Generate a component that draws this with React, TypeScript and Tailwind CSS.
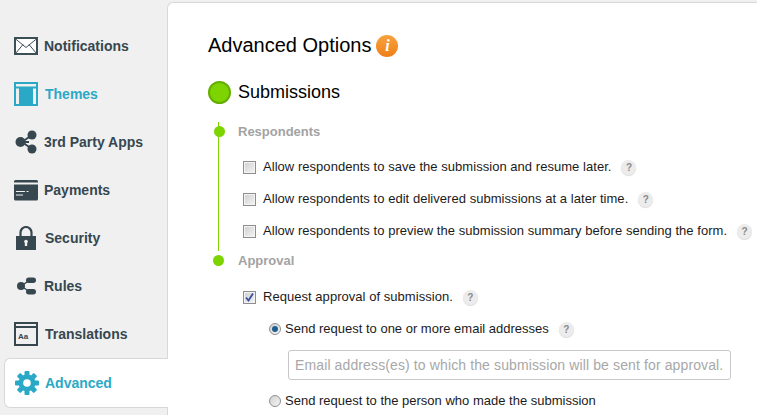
import React from 'react';

const navText = 'text-[14px] font-bold text-[#36474f]';
const activeText = 'text-[14px] font-bold text-[#2aa9c7]';

const MailIcon = () => (
  <svg width="24" height="18" viewBox="0 0 24 18">
    <rect x="1" y="1" width="22" height="16" fill="#fff" stroke="#3c4f57" strokeWidth="2" />
    <path d="M1 1.500 12 10.500 23 1.500M1.500 16.500 9 7.500M22.500 16.500 15 7.500" fill="none" stroke="#3c4f57" strokeWidth="1" />
  </svg>
);

const ThemeIcon = () => (
  <svg width="24" height="24" viewBox="0 0 24 24">
    <path d="M0 0h24v24H0z" fill="#2aa9c7" />
    <path d="M2 2h20v2.500H2zM2 6.500h3v15.500H2zM19 6.500h3v15.500h-3z" fill="#f0f0f0" />
  </svg>
);

const AppsIcon = () => (
  <svg width="24" height="24" viewBox="0 0 24 24">
    <path d="M8 12 18 5M8 12h7M8 12l10 7" stroke="#36474f" strokeWidth="2" fill="none" />
    <circle cx="6.500" cy="12" r="5" fill="#36474f" />
    <circle cx="18" cy="5" r="4.500" fill="#36474f" />
    <circle cx="18" cy="19" r="4.500" fill="#36474f" />
  </svg>
);

const CardIcon = () => (
  <svg width="24" height="21" viewBox="0 0 24 21">
    <path d="M1.500 0h21A1.500 1.500 0 0 1 24 1.500V2.500H0V1.500A1.500 1.500 0 0 1 1.500 0z" fill="#36474f" />
    <path d="M0 4.500h24V19a1.500 1.500 0 0 1-1.500 1.500h-21A1.500 1.500 0 0 1 0 19z" fill="#36474f" />
    <path d="M2 11h9v1H2zM2 14.500h7v1H2zM12.500 11h2v1h-2z" fill="#f0f0f0" />
  </svg>
);

const LockIcon = () => (
  <svg width="20" height="24" viewBox="0 0 20 24">
    <path d="M4.500 11V6.500a5.500 5.500 0 0 1 11 0V11" fill="none" stroke="#36474f" strokeWidth="2.200" />
    <path d="M0 10h20v14H0z" fill="#36474f" />
    <path d="M8.800 15h2.400v5H8.800z" fill="#f0f0f0" />
    <circle cx="10" cy="15.500" r="1.800" fill="#f0f0f0" />
  </svg>
);

const RulesIcon = () => (
  <svg width="20" height="18" viewBox="0 0 20 18">
    <path d="M5 9 14 3M5 9l9 6" stroke="#36474f" strokeWidth="1.500" fill="none" />
    <circle cx="5" cy="9" r="4" fill="#36474f" />
    <rect x="10" y="0.500" width="10" height="5.500" rx="2.750" fill="#36474f" />
    <rect x="10" y="12" width="10" height="5.500" rx="2.750" fill="#36474f" />
  </svg>
);

const TranslationIcon = () => (
  <div className="flex h-6 w-6 flex-col border-2 border-[#36474f]">
    <div className="mt-[2px] h-[2px] bg-[#36474f]" />
    <span className="mt-[4px] pl-[2px] text-[8px] leading-[10px] font-bold text-[#36474f]">Aa</span>
  </div>
);

const GearIcon = () => (
  <svg width="24" height="24" viewBox="0 0 24 24">
    <g fill="#2aa9c7">
      <rect x="9.500" y="0" width="5" height="24" rx="1" />
      <rect x="9.500" y="0" width="5" height="24" rx="1" transform="rotate(45 12 12)" />
      <rect x="9.500" y="0" width="5" height="24" rx="1" transform="rotate(90 12 12)" />
      <rect x="9.500" y="0" width="5" height="24" rx="1" transform="rotate(135 12 12)" />
      <circle cx="12" cy="12" r="8.500" />
    </g>
    <circle cx="12" cy="12" r="3.800" fill="#fff" />
  </svg>
);

const navItems = [
  { label: 'Notifications', icon: <MailIcon />, gap: 'gap-[6px]', active: false },
  { label: 'Themes', icon: <ThemeIcon />, gap: 'gap-[7px]', active: true },
  { label: '3rd Party Apps', icon: <AppsIcon />, gap: 'gap-[6px]', active: false },
  { label: 'Payments', icon: <CardIcon />, gap: 'gap-[6px]', active: false },
  { label: 'Security', icon: <LockIcon />, gap: 'gap-[7px]', active: false },
  { label: 'Rules', icon: <RulesIcon />, gap: 'gap-[6px]', active: false },
  { label: 'Translations', icon: <TranslationIcon />, gap: 'gap-[7px]', active: false },
];

const HelpBadge = () => (
  <span className="ml-[10px] flex h-[15px] w-[15px] flex-none items-center justify-center rounded-full bg-[#ececec] text-[10px] font-bold text-[#8a8a8a] shadow-[0_1px_1px_rgba(0,0,0,0.15)]">
    ?
  </span>
);

const CheckRow = ({ label, checked }: { label: string; checked?: boolean }) => (
  <div className="flex h-[20px] items-center">
    <span className="mr-[7px] flex h-[13px] w-[13px] flex-none items-center justify-center border border-[#8e8e8e] bg-gradient-to-br from-[#cfcfcf] to-[#f4f4f4] shadow-[inset_0_0_0_1px_#f4f4f4]">
      {checked && (
        <svg width="9" height="9" viewBox="0 0 9 9">
          <path d="M1 4.500 3.500 7.500 8 0.500" fill="none" stroke="#3d4f9e" strokeWidth="1.800" />
        </svg>
      )}
    </span>
    <span className="text-[13px] tracking-[0.04px] text-[#1b1b1b]">{label}</span>
    <HelpBadge />
  </div>
);

const Radio = ({ checked }: { checked?: boolean }) => (
  <span className="mr-[4px] flex h-[12px] w-[12px] flex-none items-center justify-center rounded-full border border-[#8f8f8f] bg-gradient-to-br from-[#d0d0d0] to-[#f6f6f6]">
    {checked && <span className="h-[6px] w-[6px] rounded-full bg-[#1f5f8f]" />}
  </span>
);

// green dot on the timeline, centred on the line
const SubNode = () => (
  <span className="absolute top-[4px] left-[-5px] h-[11px] w-[11px] rounded-full bg-[#7ed400]" />
);

export default function App() {
  return (
    <div className="flex h-[415px] w-[757px] overflow-hidden bg-[#f0f0f0] font-['Liberation_Sans',Arial,sans-serif]">
      {/* Sidebar */}
      <aside className="flex w-[167px] flex-none flex-col pt-[22px]">
        {navItems.map((item) => (
          <div key={item.label} className={`flex h-[48px] items-center pl-[14px] ${item.gap}`}>
            <span className="flex w-[24px] flex-none items-center justify-center">{item.icon}</span>
            <span className={item.active ? activeText : navText}>{item.label}</span>
          </div>
        ))}
        <div className="relative z-10 ml-[4px] mr-[-1px] flex h-[50px] items-center gap-[6px] rounded-l-[6px] border border-r-0 border-[#d8d8d8] bg-white pl-[10px]">
          <GearIcon />
          <span className={activeText}>Advanced</span>
        </div>
      </aside>

      {/* Main panel */}
      <main className="mt-[2px] flex-1 rounded-tl-[6px] border-t border-l border-[#d8d8d8] bg-white pl-[40px]">
        <div className="mt-[28px] flex h-[28px] items-center gap-[5px]">
          <h1 className="text-[20px] font-normal text-black">Advanced Options</h1>
          <span className="mt-[2px] flex h-[22px] w-[22px] items-center justify-center rounded-full bg-gradient-to-b from-[#f9a23c] to-[#ee7f16] font-['Liberation_Serif',serif] text-[16px] font-bold text-white italic">
            i
          </span>
        </div>

        <div className="mt-[21px] flex h-[24px] items-center gap-[7px]">
          <span className="h-[23px] w-[23px] rounded-full border-2 border-[#64ae00] bg-[#7ed400]" />
          <h2 className="text-[18px] font-normal text-black">Submissions</h2>
        </div>

        <div className="ml-[10px] border-l border-[#7ed400] pl-[19px]">
          <div className="relative -ml-[19px] mt-[18px] flex h-[20px] items-center pl-[19px]">
            <SubNode />
            <h3 className="text-[13px] font-bold text-[#a3a3a3]">Respondents</h3>
          </div>
          <div className="mt-[15px] ml-[5px] flex flex-col gap-[12px]">
            <CheckRow label="Allow respondents to save the submission and resume later." />
            <CheckRow label="Allow respondents to edit delivered submissions at a later time." />
            <CheckRow label="Allow respondents to preview the submission summary before sending the form." />
          </div>
          <div className="h-[10px]" />
        </div>

        <div className="relative ml-[10px] flex h-[20px] items-center pl-[20px]">
          <SubNode />
          <h3 className="text-[13px] font-bold text-[#a3a3a3]">Approval</h3>
        </div>

        <div className="mt-[16px] ml-[35px]">
          <CheckRow label="Request approval of submission." checked />
          <div className="mt-[12px] ml-[26px] flex h-[20px] items-center">
            <Radio checked />
            <span className="text-[13px] text-[#1b1b1b]">Send request to one or more email addresses</span>
            <HelpBadge />
          </div>
          <input
            readOnly
            placeholder="Email address(es) to which the submission will be sent for approval."
            className="mt-[11px] ml-[45px] block h-[30px] w-[443px] rounded-[3px] border border-[#c8c8c8] bg-white px-[6px] text-[14px] tracking-[0.12px] placeholder:text-[#a8a8a8]"
          />
          <div className="mt-[11px] ml-[26px] flex h-[20px] items-center">
            <Radio />
            <span className="text-[13px] text-[#1b1b1b]">Send request to the person who made the submission</span>
          </div>
        </div>
      </main>
    </div>
  );
}
